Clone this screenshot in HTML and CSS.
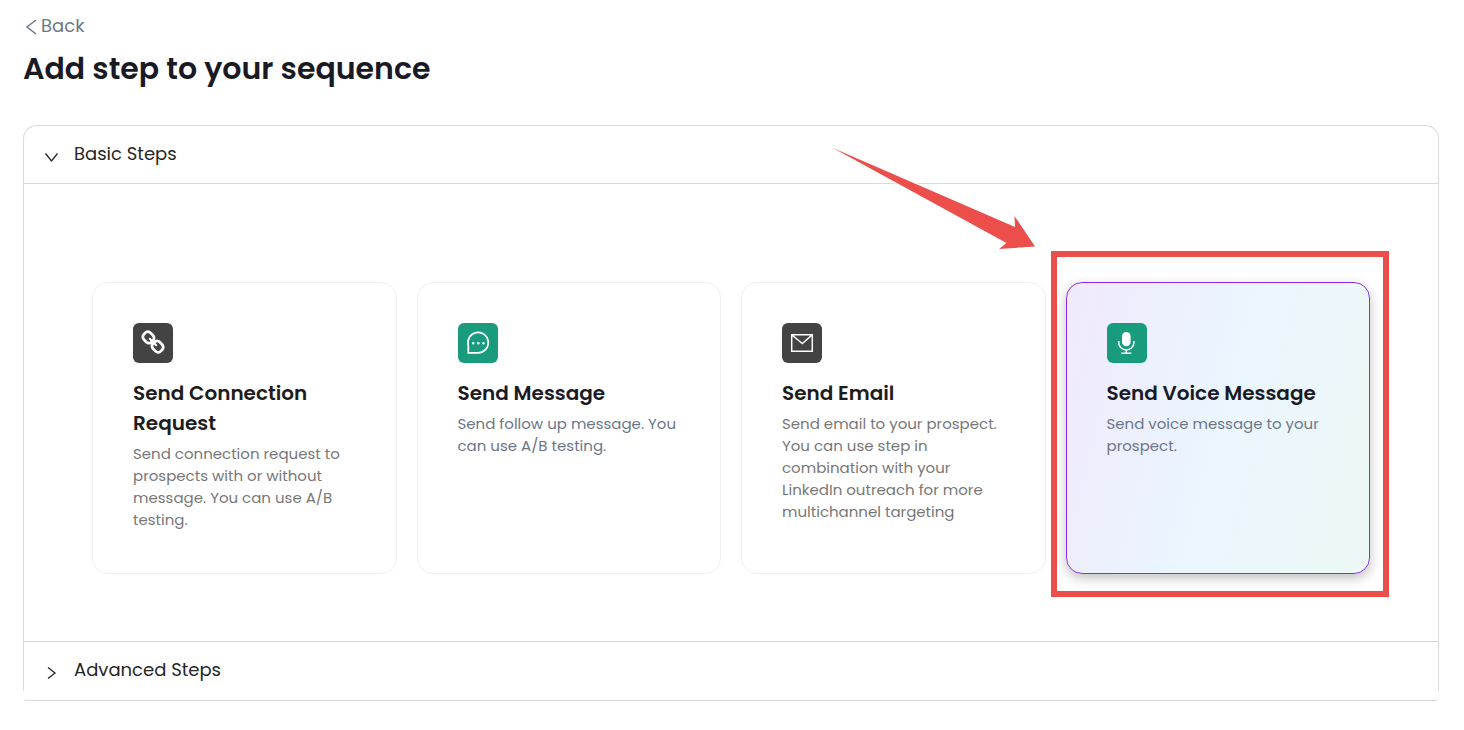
FILE: index.html
```html
<!DOCTYPE html>
<html lang="en">
<head>
<meta charset="utf-8">
<meta name="viewport" content="width=device-width, initial-scale=1">
<title>Add step to your sequence</title>
<link rel="stylesheet" href="styles.css">
</head>
<body>
<main class="page">
  <a class="back" href="#">
    <svg class="back-icon" viewBox="0 0 12 16" aria-hidden="true"><path d="M11 2 2 9l9 7"/></svg>
    <span>Back</span>
  </a>
  <h1 class="page-title">Add step to your sequence</h1>

  <div class="accordion">
    <section class="item">
      <button class="item-header" type="button" aria-expanded="true">
        <svg class="chevron" viewBox="0 0 14 14" aria-hidden="true"><path d="M1.500 3.500 7.500 11l6-7.500"/></svg>
        <span>Basic Steps</span>
      </button>
      <div class="cards">
        <button class="card muted" type="button">
          <span class="tile dark">
            <svg viewBox="0 0 40 40" aria-hidden="true">
              <g fill="none" stroke="#fff" stroke-width="2.800" transform="rotate(45 20 19)">
                <rect x="8" y="14.300" width="11" height="9.400" rx="3.800"/>
                <rect x="21" y="14.300" width="11" height="9.400" rx="3.800"/>
                <path d="M15.500 19h2M22.500 19h2" stroke-width="2" stroke-linecap="round"/>
                <path d="M18 19h4"/>
              </g>
            </svg>
          </span>
          <span class="card-title">Send Connection Request</span>
          <span class="card-text">Send connection request to prospects with or without message. You can use A/B testing.</span>
        </button>
        <button class="card" type="button">
          <span class="tile green">
            <svg viewBox="0 0 40 40" aria-hidden="true">
              <path d="M10.300 29.800V22.500A10.200 10.200 0 1 1 20.200 29.800Z" fill="none" stroke="#fff" stroke-width="1.700"/>
              <g fill="#fff"><circle cx="15.200" cy="20.200" r="1.200"/><circle cx="20.300" cy="20.200" r="1.200"/><circle cx="25.400" cy="20.200" r="1.200"/></g>
            </svg>
          </span>
          <span class="card-title">Send Message</span>
          <span class="card-text">Send follow up message. You can use A/B testing.</span>
        </button>
        <button class="card muted" type="button">
          <span class="tile dark">
            <svg viewBox="0 0 40 40" aria-hidden="true">
              <path d="M9.700 11.700h20.600v16.600H9.700ZM10 12l10.300 8.500L30 12" fill="none" stroke="#fff" stroke-width="1.500"/>
            </svg>
          </span>
          <span class="card-title">Send Email</span>
          <span class="card-text">Send email to your prospect. You can use step in combination with your LinkedIn outreach for more multichannel targeting</span>
        </button>
        <div class="highlight">
          <button class="card selected" type="button">
            <span class="tile green">
              <svg viewBox="0 0 40 40" aria-hidden="true">
                <rect x="15" y="9" width="8.600" height="14.200" rx="4.300" fill="#fff"/>
                <path d="M11.700 18v1.400a7.600 7.600 0 0 0 15.200 0V18M19.300 27v3M14.300 30.200h10" fill="none" stroke="#fff" stroke-width="1.500"/>
              </svg>
            </span>
            <span class="card-title">Send Voice Message</span>
            <span class="card-text">Send voice message to your prospect.</span>
          </button>
          <div class="highlight-frame"></div>
          <svg class="highlight-arrow" viewBox="0 0 208 108" aria-hidden="true">
            <path d="M3 3 185 82 184.500 71 205 101.500 169 104 176.500 98Z"/>
          </svg>
        </div>
      </div>
    </section>
    <section class="item last">
      <button class="item-header" type="button" aria-expanded="false">
        <svg class="chevron" viewBox="0 0 14 14" aria-hidden="true"><path d="M4 1.500 11 7l-7 5.500"/></svg>
        <span>Advanced Steps</span>
      </button>
    </section>
  </div>
</main>
</body>
</html>
```
FILE: styles.css
```css
* {
  box-sizing: border-box;
}

body {
  margin: 0;
  background: #fff;
  color: #1a1a25;
  font-family: Poppins, Inter, "Open Sans", sans-serif;
}

button {
  margin: 0;
  font: inherit;
  text-align: left;
  cursor: pointer;
}

.page {
  padding: 14px 25px 28px 23px;
}

.back {
  display: inline-flex;
  align-items: center;
  gap: 4px;
  padding-left: 2px;
  color: #6c7689;
  font-size: 18px;
  line-height: 24px;
  text-decoration: none;
}

.back-icon {
  width: 12px;
  height: 16px;
  overflow: visible;
  fill: none;
  stroke: currentColor;
  stroke-width: 1.5;
}

.page-title {
  margin: 6px 0 34px;
  font-size: 30px;
  font-weight: 600;
  line-height: 44px;
}

.accordion {
  border: 1px solid #d9d9d9;
  border-bottom: 0;
  border-radius: 14px;
}

.item {
  border-bottom: 1px solid #d9d9d9;
}

.item.last {
  border-radius: 0 0 2px 2px;
  background: #fff;
}

.item-header {
  display: flex;
  align-items: center;
  gap: 16px;
  width: 100%;
  padding: 16px 20px 17px;
  border: 0;
  background: none;
  color: #262626;
  font-size: 18px;
  line-height: 24px;
}

.last .item-header {
  padding-bottom: 18px;
}

.chevron {
  width: 14px;
  height: 14px;
  margin-top: 6px;
  fill: none;
  stroke: currentColor;
  stroke-width: 1.3;
}

.cards {
  display: grid;
  grid-template-columns: repeat(4, minmax(0, 1fr));
  gap: 20px;
  padding: 98px 68px 67px;
  border-top: 1px solid #d9d9d9;
}

.card {
  display: flex;
  flex-direction: column;
  align-items: flex-start;
  justify-content: flex-start;
  width: 100%;
  height: 100%;
  padding: 40px 40px 42px;
  border: 1px solid #f0f0f0;
  border-radius: 16px;
  background: #fff;
  color: #1a1a25;
}

.card.selected {
  border-color: #8f2be0;
  background: linear-gradient(105deg, #f1e9fd 0%, #eaf5fe 48%, #edf9f6 100%);
  box-shadow: 0 4px 12px rgba(0, 0, 0, 0.25);
}

.tile {
  width: 40px;
  height: 40px;
  margin-bottom: 15px;
  border-radius: 6px;
}

.tile svg {
  display: block;
}

.dark {
  background: #434343;
}

.green {
  background: #189c7d;
}

.card-title {
  margin-bottom: 5px;
  font-size: 20px;
  font-weight: 600;
  line-height: 30px;
}

.card-text {
  color: #6c7689;
  font-size: 15px;
  line-height: 22px;
}

.muted {
  color: #1c1c1c;
}

.muted .card-text {
  color: #777;
}

.highlight {
  position: relative;
}

.highlight-frame {
  position: absolute;
  inset: -31px -19px -23px -15px;
  border: 6px solid #eb4e4b;
  pointer-events: none;
}

.highlight-arrow {
  position: absolute;
  top: -137px;
  left: -236px;
  width: 208px;
  height: 108px;
  fill: #eb4e4b;
  stroke: #fff;
  stroke-width: 2;
  paint-order: stroke;
  pointer-events: none;
}
```
